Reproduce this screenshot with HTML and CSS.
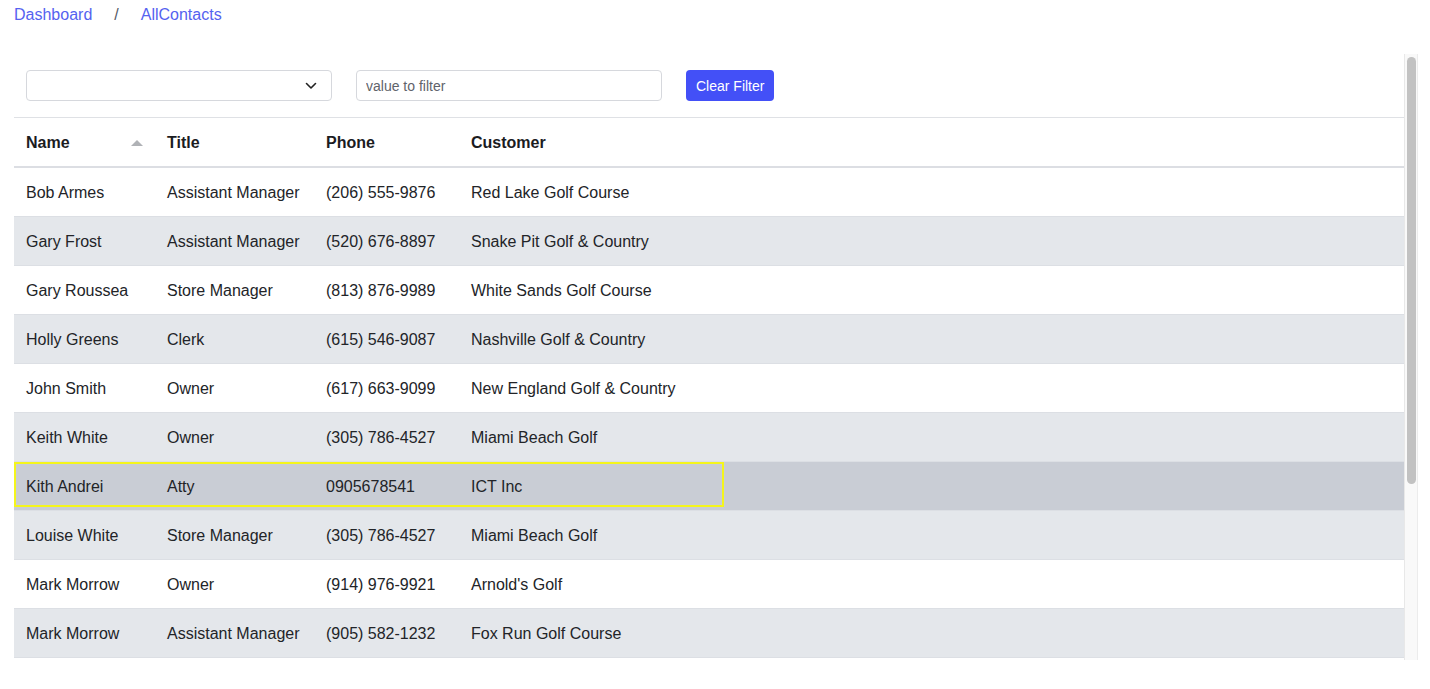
FILE: index.html
```html
<!DOCTYPE html>
<html>
<head>
<meta charset="utf-8">
<link rel="stylesheet" href="styles.css">
</head>
<body>
<nav class="crumbs">
  <a class="crumb">Dashboard</a>
  <span class="sep">/</span>
  <a class="crumb">AllContacts</a>
</nav>
<div class="panel">
  <div class="scroller">
    <div class="controls">
      <div class="select">
        <svg class="chev" width="12" height="8" viewBox="0 0 12 8"><path d="M1.5 1.5 L6 6 L10.5 1.5" fill="none" stroke="#222" stroke-width="1.6" stroke-linecap="round" stroke-linejoin="round"/></svg>
      </div>
      <input class="filter" type="text" placeholder="value to filter">
      <button class="btn">Clear Filter</button>
    </div>
    <div class="table">
      <div class="row head">
        <div class="cell c1">Name <span class="sort"></span></div>
        <div class="cell c2">Title</div>
        <div class="cell c3">Phone</div>
        <div class="cell c4">Customer</div>
      </div>
      <div class="row"><div class="cell c1">Bob Armes</div><div class="cell c2">Assistant Manager</div><div class="cell c3">(206) 555-9876</div><div class="cell c4">Red Lake Golf Course</div></div>
      <div class="row alt"><div class="cell c1">Gary Frost</div><div class="cell c2">Assistant Manager</div><div class="cell c3">(520) 676-8897</div><div class="cell c4">Snake Pit Golf &amp; Country</div></div>
      <div class="row"><div class="cell c1">Gary Roussea</div><div class="cell c2">Store Manager</div><div class="cell c3">(813) 876-9989</div><div class="cell c4">White Sands Golf Course</div></div>
      <div class="row alt"><div class="cell c1">Holly Greens</div><div class="cell c2">Clerk</div><div class="cell c3">(615) 546-9087</div><div class="cell c4">Nashville Golf &amp; Country</div></div>
      <div class="row"><div class="cell c1">John Smith</div><div class="cell c2">Owner</div><div class="cell c3">(617) 663-9099</div><div class="cell c4">New England Golf &amp; Country</div></div>
      <div class="row alt"><div class="cell c1">Keith White</div><div class="cell c2">Owner</div><div class="cell c3">(305) 786-4527</div><div class="cell c4">Miami Beach Golf</div></div>
      <div class="row sel"><div class="cell c1">Kith Andrei</div><div class="cell c2">Atty</div><div class="cell c3">0905678541</div><div class="cell c4">ICT Inc</div><span class="focus"></span></div>
      <div class="row alt"><div class="cell c1">Louise White</div><div class="cell c2">Store Manager</div><div class="cell c3">(305) 786-4527</div><div class="cell c4">Miami Beach Golf</div></div>
      <div class="row"><div class="cell c1">Mark Morrow</div><div class="cell c2">Owner</div><div class="cell c3">(914) 976-9921</div><div class="cell c4">Arnold's Golf</div></div>
      <div class="row alt"><div class="cell c1">Mark Morrow</div><div class="cell c2">Assistant Manager</div><div class="cell c3">(905) 582-1232</div><div class="cell c4">Fox Run Golf Course</div></div>
    </div>
  </div>
  <div class="vbar"><div class="thumb"></div></div>
</div>
</body>
</html>
```

FILE: styles.css
```css
html, body {
  margin: 0;
  padding: 0;
  background: #ffffff;
}
body {
  font-family: "Liberation Sans", Arial, sans-serif;
  font-size: 16px;
  color: #222428;
  padding: 0 12px 0 14px;
}
.crumbs {
  display: flex;
  align-items: center;
  height: 28px;
  line-height: 24px;
  padding-top: 2px;
  box-sizing: border-box;
}
.crumb {
  color: #5562f0;
  text-decoration: none;
}
.sep {
  color: #555a66;
  margin: 0 22px;
}
.panel {
  margin-top: 26px;
  height: 606px;
  display: flex;
}
.scroller {
  flex: 1;
  min-width: 0;
  overflow: hidden;
}
.vbar {
  width: 14px;
  flex: none;
  box-sizing: border-box;
  background: #f9f9f9;
  border-left: 1px solid #e8e8e8;
  border-right: 1px solid #ececec;
  padding: 3px 1px 0 2px;
}
.thumb {
  width: 9px;
  height: 427px;
  border-radius: 5px;
  background: #c2c2c2;
}
.controls {
  display: flex;
  align-items: center;
  gap: 24px;
  padding: 16px 12px;
  border-bottom: 1px solid #dfe1e5;
}
.select {
  position: relative;
  width: 306px;
  height: 31px;
  box-sizing: border-box;
  border: 1px solid #d6d8dd;
  border-radius: 4px;
  background: #fff;
}
.chev {
  position: absolute;
  right: 14px;
  top: 11px;
}
.filter {
  width: 306px;
  height: 31px;
  box-sizing: border-box;
  border: 1px solid #d6d8dd;
  border-radius: 4px;
  padding: 0 9px;
  font-family: "Liberation Sans", Arial, sans-serif;
  font-size: 14px;
  color: #222;
  outline: none;
}
.filter::placeholder {
  color: #5f636b;
}
.btn {
  height: 31px;
  padding: 0 10px;
  border: none;
  border-radius: 4px;
  background: #4350f7;
  color: #ffffff;
  font-family: "Liberation Sans", Arial, sans-serif;
  font-size: 14px;
  font-weight: 500;
}
.table {
  display: flex;
  flex-direction: column;
}
.row {
  position: relative;
  display: flex;
  align-items: center;
  height: 49px;
  padding-top: 1px;
  box-sizing: border-box;
  border-bottom: 1px solid #dcdfe4;
  background: #ffffff;
}
.row.head {
  height: 50px;
  border-bottom: 2px solid #dcdee3;
  font-weight: bold;
  color: #1b1c1f;
}
.row.alt {
  background: #e4e7eb;
}
.row.sel {
  background: #c9cdd5;
}
.cell {
  padding-left: 12px;
  box-sizing: border-box;
  white-space: nowrap;
}
.c1 { width: 141px; position: relative; }
.c2 { width: 159px; }
.c3 { width: 145px; }
.c4 { width: 265px; }
.sort {
  position: absolute;
  left: 117px;
  top: 6px;
  width: 0;
  height: 0;
  border-left: 6px solid transparent;
  border-right: 6px solid transparent;
  border-bottom: 6px solid #b0b2b6;
}
.focus {
  position: absolute;
  left: 0;
  top: 0;
  width: 710px;
  height: 45px;
  box-sizing: border-box;
  border: 2px solid #f4f51c;
  pointer-events: none;
}
```
